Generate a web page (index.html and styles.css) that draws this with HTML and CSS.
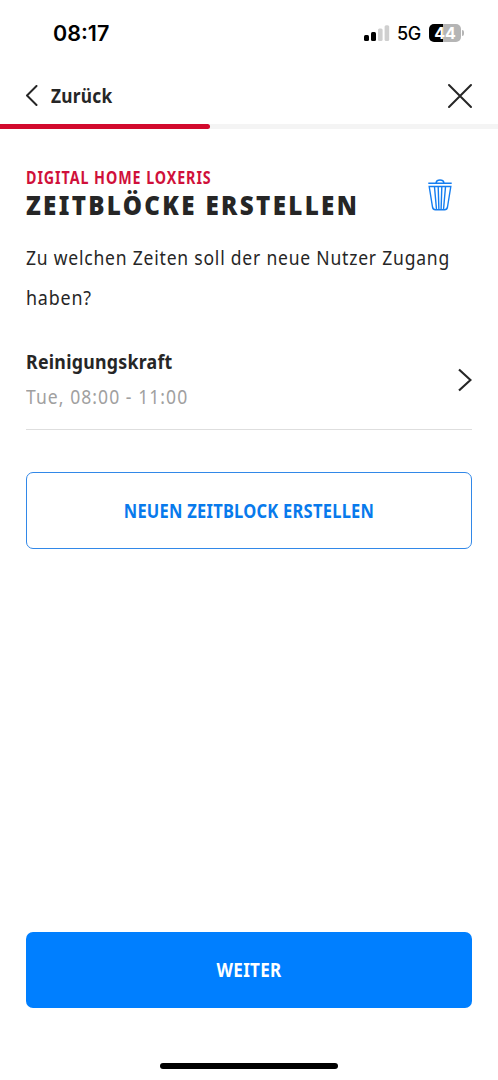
FILE: index.html
```html
<!DOCTYPE html>
<html lang="de">
<head>
<meta charset="utf-8">
<title>Zeitblöcke erstellen</title>
<link rel="stylesheet" href="styles.css">
</head>
<body>
<div class="screen">
  <div class="status">
    <span class="time">08:17</span>
    <div class="indicators">
      <svg class="signal" width="26" height="16" viewBox="0 0 26 16"><rect x="0" y="10" width="5" height="6" rx="1.5"/><rect x="7" y="7" width="5" height="9" rx="1.5"/><g fill="#cfcfcf"><rect x="14" y="3.5" width="4.6" height="12.5" rx="1.5"/><rect x="20.6" y="0.3" width="4.6" height="15.7" rx="1.5"/></g></svg>
      <span class="network">5G</span>
      <div class="battery"><span>44</span></div>
      <i class="battery-tip"></i>
    </div>
  </div>
  <nav class="nav">
    <a class="back"><svg width="13" height="21" viewBox="0 0 13 21"><path d="M11.500 1 2 10.500 11.500 20"/></svg><span class="fit back-label">Zurück</span></a>
    <svg class="close" width="26" height="26" viewBox="0 0 26 26"><path d="m2 2 22 22M24 2 2 24"/></svg>
  </nav>
  <div class="progress"><div class="progress-bar"></div></div>
  <main class="content">
    <header class="heading">
      <div>
        <div class="overline"><span class="fit overline-text">DIGITAL HOME LOXERIS</span></div>
        <h1><span class="fit title-text">ZEITBLÖCKE ERSTELLEN</span></h1>
      </div>
      <svg class="trash" width="24" height="32" viewBox="0 0 24 32"><path d="M.3 4.200h23.400M8 3.800c.8-3.700 7.200-3.700 8 0M1.200 7.500h21.600L19.500 28q-.5 2.700-2.800 2.700H7.300Q5 30.700 4.500 28ZM6.500 8l2 22.500M10.200 8l.7 22.500M13.800 8l-.7 22.500M17.500 8l-2 22.500"/></svg>
    </header>
    <p class="question"><span class="fit q1">Zu welchen Zeiten soll der neue Nutzer Zugang</span><br><span class="fit q2">haben?</span></p>
    <div class="block">
      <div>
        <div class="name"><span class="fit name-text">Reinigungskraft</span></div>
        <div class="when"><span class="fit when-text">Tue, 08:00 - 11:00</span></div>
      </div>
      <svg class="chevron" width="14" height="24" viewBox="0 0 14 24"><path d="m1 1.500 11.500 10.500-11.500 10.500"/></svg>
    </div>
    <button class="button outline"><span class="fit center new-text">NEUEN ZEITBLOCK ERSTELLEN</span></button>
  </main>
  <footer>
    <button class="button primary"><span class="fit center next-text">WEITER</span></button>
    <div class="home"></div>
  </footer>
</div>
</body>
</html>
```
FILE: styles.css
```css
* { box-sizing: border-box; }
body { margin: 0; background: #fff; color: #262626; font-family: "Noto Sans", sans-serif; }
.screen { height: 1080px; display: flex; flex-direction: column; overflow: hidden; }
svg { display: block; fill: none; stroke: currentColor; flex: none; }

/* Condensed lettering */
.fit { display: inline-block; transform-origin: left center; white-space: nowrap; }
.center { transform-origin: center; }
.back-label { letter-spacing: 0.3px; transform: scaleX(0.865); }
.overline-text { letter-spacing: 1.1px; transform: scaleX(0.84); }
.title-text { letter-spacing: 2.6px; transform: scaleX(0.895); }
.q1 { letter-spacing: 0.9px; transform: scaleX(0.876); }
.q2 { letter-spacing: 0.9px; transform: scaleX(0.895); }
.name-text { letter-spacing: 0.3px; transform: scaleX(0.887); }
.when-text { letter-spacing: 1.2px; transform: scaleX(0.877); }
.new-text { letter-spacing: 0.3px; transform: scaleX(0.824); }
.next-text { letter-spacing: 0.3px; transform: scaleX(0.852); }

.status { height: 66px; padding: 0 34px 0 53px; display: flex; align-items: center; justify-content: space-between; color: #000; font-family: Inter, sans-serif; }
.time { font-size: 21.5px; font-weight: 600; }
.indicators { display: flex; align-items: center; }
.signal { fill: #000; stroke: none; }
.network { width: 24px; margin-left: 7px; font-size: 18px; font-weight: 500; letter-spacing: -0.3px; }
.battery { width: 32px; height: 18px; margin-left: 8px; border-radius: 5px; background: linear-gradient(90deg, #000 44%, #b5b5b5 44%); color: #fff; font-size: 16px; font-weight: 700; line-height: 18px; text-align: center; }
.battery-tip { width: 2px; height: 6px; margin-left: 1px; border-radius: 0 2px 2px 0; background: #b5b5b5; }

.nav { height: 58px; padding: 1px 25px 0; display: flex; align-items: center; justify-content: space-between; }
.back { display: flex; align-items: center; gap: 13px; font-size: 20px; font-weight: 700; }
.back svg, .close { stroke-width: 2; stroke-linecap: round; stroke-linejoin: round; }
.progress { height: 5px; background: #f4f4f4; }
.progress-bar { width: 210px; height: 5px; border-radius: 0 3px 3px 0; background: #d20a2d; }

.content { padding: 39px 26px 0 25.5px; }
.heading { display: flex; justify-content: space-between; padding-right: 20px; }
.overline { height: 19px; line-height: 19px; font-size: 17px; font-weight: 700; color: #d0103a; }
h1 { margin: 0; height: 36px; line-height: 36px; font-size: 27px; font-weight: 900; }
.trash { margin-top: 11px; color: #147df0; stroke-width: 1.4; }
.question { margin: 15px 0 0; font-size: 20px; line-height: 39.5px; }
.block { height: 113px; display: flex; justify-content: space-between; border-bottom: 1px solid #dedede; }
.name { height: 35px; margin-top: 27px; line-height: 35px; font-size: 20px; font-weight: 700; }
.when { height: 35px; line-height: 35px; font-size: 20px; color: #a0a0a0; }
.chevron { margin-top: 51px; stroke-width: 2.2; }
.button { display: flex; align-items: center; justify-content: center; width: 100%; height: 77px; padding: 0; border-radius: 7px; font: 700 20px "Noto Sans", sans-serif; }
.outline { margin-top: 42px; border: 1.5px solid #3288e8; background: #fff; color: #087aec; }
footer { margin-top: auto; padding: 0 26px 0 25.5px; }
.primary { height: 76px; padding-bottom: 1px; border: 0; background: #007fff; color: #fff; }
.home { width: 178px; height: 6px; margin: 55px auto 11px; border-radius: 3px; background: #000; }
```
